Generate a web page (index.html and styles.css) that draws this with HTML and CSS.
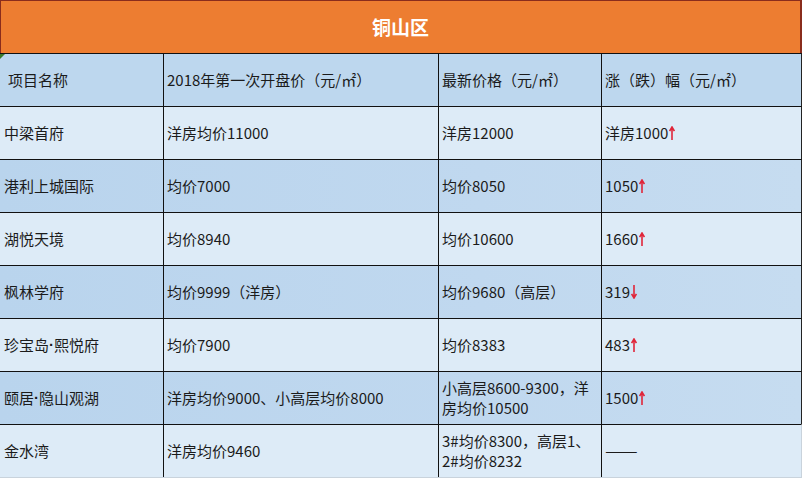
FILE: index.html
```html
<!DOCTYPE html>
<html lang="zh-CN">
<head>
<meta charset="utf-8">
<title>铜山区</title>
<link rel="stylesheet" href="styles.css">
</head>
<body>
<div class="sheet">
  <div class="title">铜山区</div>
  <div class="row head">
    <div class="cell first">项目名称</div>
    <div class="cell">2018年第一次开盘价（元/㎡）</div>
    <div class="cell">最新价格（元/㎡）</div>
    <div class="cell">涨（跌）幅（元/㎡）</div>
    <span class="mark"></span>
  </div>
  <div class="row light">
    <div class="cell">中梁首府</div>
    <div class="cell">洋房均价11000</div>
    <div class="cell">洋房12000</div>
    <div class="cell">洋房1000<svg class="arrow" viewBox="0 0 6 14" width="6" height="14"><path d="M3 1.5V14M0.6 5L3 1L5.4 5" fill="none" stroke="#e0263a" stroke-width="1.6"/></svg></div>
  </div>
  <div class="row dark">
    <div class="cell">港利上城国际</div>
    <div class="cell">均价7000</div>
    <div class="cell">均价8050</div>
    <div class="cell">1050<svg class="arrow" viewBox="0 0 6 14" width="6" height="14"><path d="M3 1.5V14M0.6 5L3 1L5.4 5" fill="none" stroke="#e0263a" stroke-width="1.6"/></svg></div>
  </div>
  <div class="row light">
    <div class="cell">湖悦天境</div>
    <div class="cell">均价8940</div>
    <div class="cell">均价10600</div>
    <div class="cell">1660<svg class="arrow" viewBox="0 0 6 14" width="6" height="14"><path d="M3 1.5V14M0.6 5L3 1L5.4 5" fill="none" stroke="#e0263a" stroke-width="1.6"/></svg></div>
  </div>
  <div class="row dark">
    <div class="cell">枫林学府</div>
    <div class="cell">均价9999（洋房）</div>
    <div class="cell">均价9680（高层）</div>
    <div class="cell">319<svg class="arrow" viewBox="0 0 6 14" width="6" height="14"><path d="M3 0V12.5M0.6 9L3 13L5.4 9" fill="none" stroke="#e0263a" stroke-width="1.6"/></svg></div>
  </div>
  <div class="row light">
    <div class="cell">珍宝岛<span class="dot">·</span>熙悦府</div>
    <div class="cell">均价7900</div>
    <div class="cell">均价8383</div>
    <div class="cell">483<svg class="arrow" viewBox="0 0 6 14" width="6" height="14"><path d="M3 1.5V14M0.6 5L3 1L5.4 5" fill="none" stroke="#e0263a" stroke-width="1.6"/></svg></div>
  </div>
  <div class="row dark">
    <div class="cell">颐居<span class="dot">·</span>隐山观湖</div>
    <div class="cell">洋房均价9000、小高层均价8000</div>
    <div class="cell">小高层8600-9300，洋<br>房均价10500</div>
    <div class="cell">1500<svg class="arrow" viewBox="0 0 6 14" width="6" height="14"><path d="M3 1.5V14M0.6 5L3 1L5.4 5" fill="none" stroke="#e0263a" stroke-width="1.6"/></svg></div>
  </div>
  <div class="row light last">
    <div class="cell">金水湾</div>
    <div class="cell">洋房均价9460</div>
    <div class="cell">3#均价8300，高层1、<br>2#均价8232</div>
    <div class="cell"><span class="dash">——</span></div>
  </div>
</div>
</body>
</html>
```

FILE: styles.css
```css
html, body {
  margin: 0;
  padding: 0;
  background: #ffffff;
}

body {
  font-family: "Noto Sans CJK SC", "Noto Sans", sans-serif;
  color: #1b1b1b;
}

.sheet {
  width: 802px;
  box-sizing: border-box;
}

.title {
  height: 53px;
  box-sizing: border-box;
  border: 1px solid #8a2c1c;
  border-bottom: none;
  border-right-width: 2px;
  background: #ed7d31;
  color: #ffffff;
  font-weight: bold;
  font-size: 19px;
  display: flex;
  align-items: center;
  justify-content: center;
  padding-bottom: 2px;
}

.row {
  position: relative;
  display: grid;
  grid-template-columns: 163px 275px 163px 201px;
  height: 53px;
  box-sizing: border-box;
  border-top: 1px solid #111111;
  border-right: 1px solid #222222;
}

.row.last {
  height: 54px;
  border-bottom: 1px solid #c9d3dc;
  border-right-color: #c9d3dc;
}

.head { background: #bdd7ee; }
.light { background: #ddebf7; }
.dark { background: linear-gradient(90deg, #b9d4ed 0%, #c0d8ef 60%, #c6dcf0 100%); }

.cell {
  display: flex;
  align-items: center;
  box-sizing: border-box;
  padding: 0 3px 1px 3px;
  font-size: 15px;
  line-height: 20px;
  border-left: 1px solid #111111;
  white-space: nowrap;
}

.cell:first-child {
  border-left: none;
  padding-left: 4px;
}

.head .cell.first {
  padding-left: 8px;
}

.dot {
  font-family: "Liberation Sans", sans-serif;
  font-weight: bold;
}

.dash {
  display: inline-block;
  letter-spacing: 0;
  transform: scaleX(1.3);
  transform-origin: left center;
}

.arrow {
  margin-left: 1px;
  flex: none;
}

.mark {
  position: absolute;
  left: 0;
  top: 0;
  width: 0;
  height: 0;
  border-top: 5px solid #3a7a2a;
  border-right: 5px solid transparent;
}
```
